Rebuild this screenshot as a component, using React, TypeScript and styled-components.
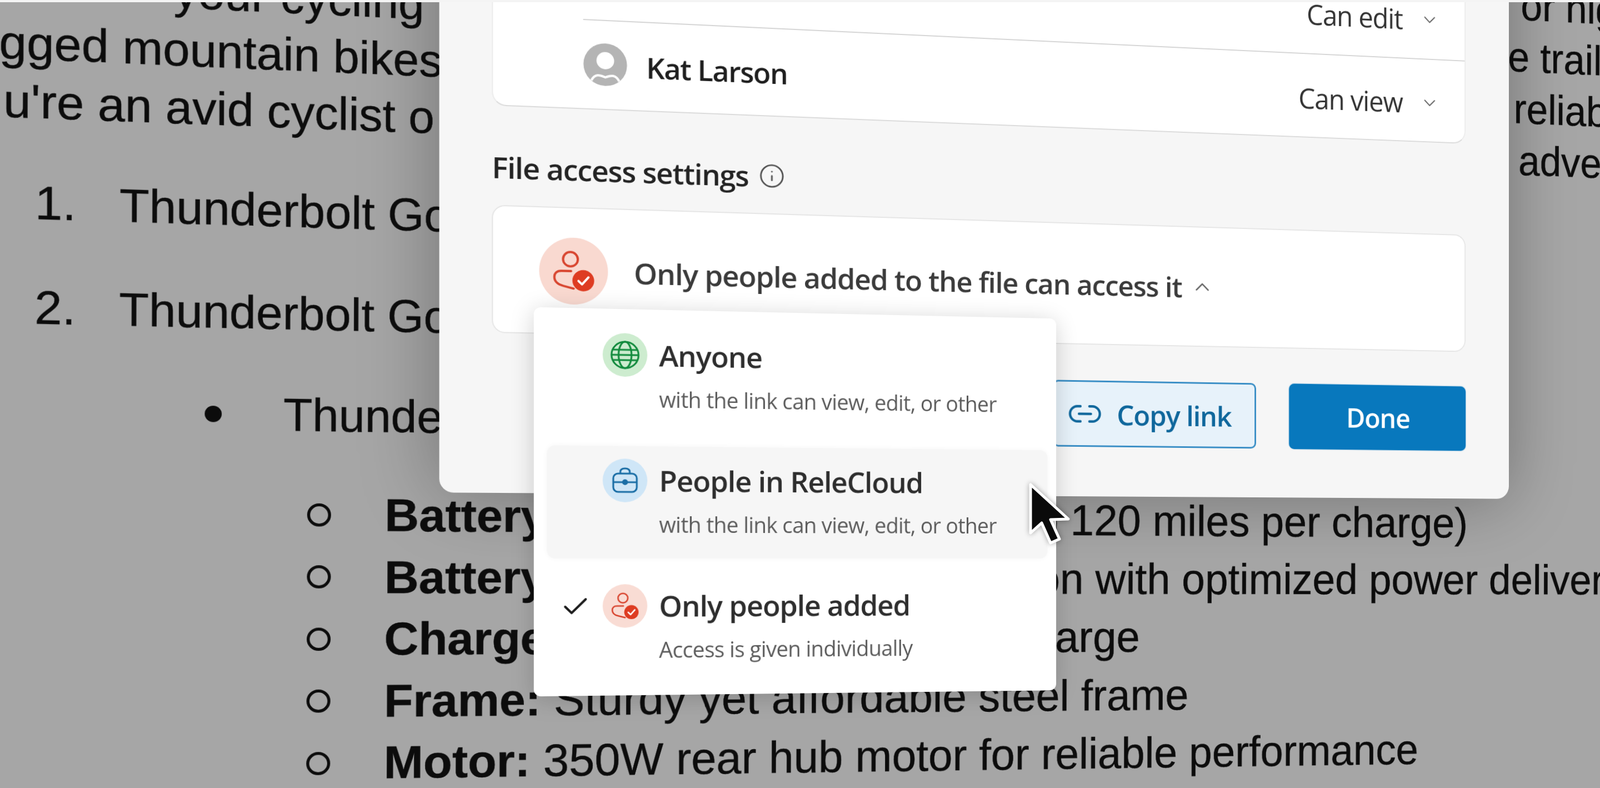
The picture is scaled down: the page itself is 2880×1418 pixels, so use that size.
import React from 'react'
import styled, { createGlobalStyle } from 'styled-components'
import { Check, ChevronDown, ChevronUp, Info, Link2 } from 'lucide-react'

const GlobalStyle = createGlobalStyle`
    html, body {
        margin: 0;
        padding: 0;
        background: #ffffff;
    }
`

const Stage = styled.div`
    position: relative;
    width: 2880px;
    height: 1418px;
    overflow: hidden;
    background: #a6a6a6;
    filter: blur(0.7px);
`

const TopStrip = styled.div`
    position: absolute;
    top: 0;
    left: 0;
    right: 0;
    height: 4px;
    background: #f4f4f4;
    z-index: 5;
`

const Doc = styled.div`
    width: 3060px;
    margin-top: -109px;
    font-family: "Liberation Sans", Arial, sans-serif;
    font-size: 79px;
    color: #0c0c0c;
    -webkit-text-stroke: 0.5px #0c0c0c;
    white-space: nowrap;
    transform-origin: 1440px 1124px;
    transform: perspective(2000px) rotateY(5.31deg) rotate(0.2deg);
`

const TextLine = styled.div`
    display: grid;
    grid-template-columns: 2795px 1fr;
    height: 99px;
    line-height: 99px;
`

const Lead = styled.span<{ $indent: number }>`
    padding-left: ${p => p.$indent}px;
`

const NumberedItem = styled.div<{ $gap: number }>`
    display: flex;
    height: 100px;
    line-height: 100px;
    margin-top: ${p => p.$gap}px;
    padding-left: 138px;
`

const ItemNumber = styled.span`
    width: 136px;
`

const BulletItem = styled.div`
    display: flex;
    align-items: center;
    height: 100px;
    margin-top: 75px;
    padding-left: 414px;
    gap: 102px;

    &::before {
        content: "";
        width: 28px;
        height: 28px;
        border-radius: 50%;
        background: #0c0c0c;
    }
`

const SubList = styled.div`
    display: flex;
    flex-direction: column;
    margin-top: 68px;
    font-size: 80.5px;
`

const SubItem = styled.div`
    display: flex;
    align-items: center;
    height: 107.5px;
    padding-left: 584px;
    gap: 90px;

    &::before {
        content: "";
        width: 30px;
        height: 30px;
        border: 5px solid #0c0c0c;
        border-radius: 50%;
    }

    b {
        font-weight: 700;
    }
`

const Dialog = styled.div`
    position: absolute;
    left: 830px;
    top: -200px;
    box-sizing: border-box;
    width: 1940px;
    height: 1092px;
    padding: 114px 86px 0 87px;
    background: #f6f6f6;
    border-radius: 24px;
    box-shadow: 0 0 130px rgba(0, 0, 0, 0.32);
    font-family: "Open Sans", "Noto Sans", sans-serif;
    transform-origin: 920px 1210px;
    transform: perspective(2000px) rotateY(5.71deg);
`

const PeopleCard = styled.div`
    background: #ffffff;
    border-radius: 0 0 24px 24px;
    border-bottom: 2px solid #dcdcdc;
    border-right: 2px solid #ececec;
    border-left: 2px solid #ececec;
    height: 310px;
    box-sizing: border-box;
`

const PersonRow = styled.div<{ $divider?: boolean }>`
    display: flex;
    align-items: center;
    height: 155px;
    box-sizing: border-box;
    margin-left: 151px;
    padding-right: 50px;
    border-bottom: ${p => (p.$divider ? '2px solid #d6d6d6' : 'none')};
`

const PersonName = styled.span`
    margin-left: 32px;
    font-size: 50px;
    font-weight: 600;
    letter-spacing: -1.4px;
    color: #1f1f1f;
`

const RoleSelect = styled.span`
    display: flex;
    align-items: center;
    gap: 34px;
    margin-left: auto;
    padding-top: 6px;
    font-size: 51px;
    letter-spacing: -1.2px;
    color: #333333;

    svg {
        color: #666666;
    }
`

const SectionTitle = styled.div`
    display: flex;
    align-items: center;
    gap: 18px;
    height: 60px;
    margin-top: 75px;
    font-size: 50.5px;
    font-weight: 600;
    letter-spacing: -1.2px;
    color: #242424;
`

const FileCard = styled.div`
    position: relative;
    display: flex;
    align-items: center;
    gap: 44px;
    box-sizing: border-box;
    height: 221px;
    margin-top: 36px;
    padding-left: 77px;
    background: #ffffff;
    border: 2px solid #e6e6e6;
    border-radius: 22px;
    font-size: 51px;
    font-weight: 600;
    letter-spacing: -1.2px;
    color: #3b3b3b;
`

const AccessValue = styled.span`
    display: flex;
    align-items: center;
    gap: 16px;

    svg {
        color: #666666;
    }
`

const IconDisc = styled.span<{ $size: number; $bg: string; $fg: string }>`
    display: flex;
    align-items: center;
    justify-content: center;
    flex: none;
    width: ${p => p.$size}px;
    height: ${p => p.$size}px;
    border-radius: 50%;
    background: ${p => p.$bg};
    color: ${p => p.$fg};
`

const Dropdown = styled.div`
    position: absolute;
    top: 173px;
    left: 68px;
    z-index: 2;
    display: flex;
    flex-direction: column;
    gap: 23px;
    box-sizing: border-box;
    width: 916px;
    height: 674px;
    padding: 20px 16px 20px 22px;
    background: #ffffff;
    border-radius: 12px;
    box-shadow: 0 6px 40px rgba(0, 0, 0, 0.18);
`

const Option = styled.div<{ $active?: boolean }>`
    display: flex;
    height: 198px;
    padding-left: 22px;
    border-radius: 14px;
    background: ${p => (p.$active ? '#f6f6f6' : 'transparent')};
    box-shadow: ${p => (p.$active ? '0 0 10px #f6f6f6' : 'none')};
`

const CheckSlot = styled.span`
    width: 52px;
    height: 52px;
    flex: none;
    margin: 32px 20px 0 0;
    color: #1c1c1c;
`

const OptionIcon = styled.div`
    margin: 22px 20px 0 0;
`

const OptionText = styled.div`
    display: flex;
    flex-direction: column;
    padding-top: 25px;
`

const OptionTitle = styled.span`
    height: 70px;
    line-height: 70px;
    font-size: 50.5px;
    font-weight: 600;
    letter-spacing: -1.1px;
    color: #2e2e2e;
`

const OptionHint = styled.span`
    margin-top: 17px;
    line-height: 50px;
    font-size: 37.5px;
    font-weight: 400;
    letter-spacing: -0.7px;
    color: #5c5c5c;
`

const Footer = styled.div`
    display: flex;
    justify-content: flex-end;
    gap: 63px;
    margin-top: 65px;
`

const CopyButton = styled.div`
    display: flex;
    align-items: center;
    justify-content: flex-end;
    gap: 26px;
    box-sizing: border-box;
    width: 380px;
    height: 121px;
    padding-right: 44px;
    background: #e7f2fa;
    border: 3px solid #3b8fc6;
    border-radius: 10px;
    font-size: 51px;
    font-weight: 600;
    letter-spacing: -1.2px;
    color: #0f679c;
`

const DoneButton = styled.div`
    display: flex;
    align-items: center;
    justify-content: center;
    width: 344px;
    height: 121px;
    background: #0878bd;
    border-radius: 10px;
    box-shadow: 0 0 2px #0878bd;
    font-size: 50.5px;
    font-weight: 600;
    letter-spacing: -1.2px;
    color: #ffffff;
`

const Pointer = styled.svg`
    position: absolute;
    left: 1843px;
    top: 863px;
    z-index: 4;
    filter: drop-shadow(0 0 5px rgba(0, 0, 0, 0.35));
`

function Avatar() {
    return (
        <svg width="75" height="80" viewBox="0 0 75 80" fill="none">
            <circle cx="37.5" cy="38" r="37" fill="#b4b4b4" />
            <circle cx="37.5" cy="31" r="15" fill="#ffffff" />
            <path d="M14 66 C20 54 28 56 37.5 60 C47 56 55 54 61 66" stroke="#ffffff" strokeWidth="4" />
            <path d="M0 62 L9 80 L0 80 Z M75 62 L66 80 L75 80 Z" fill="#ffffff" />
        </svg>
    )
}

function PersonCheck({ size }: { size: number }) {
    return (
        <svg width={size} height={size} viewBox="0 0 72 72" fill="none">
            <circle cx="31" cy="17" r="11.5" stroke="#d8452f" strokeWidth="3.5" />
            <path d="M32 36 H17 C10 36 6 40 6 46 C6 54 12 58 20 60 L36 64" stroke="#d8452f" strokeWidth="3.5" strokeLinecap="round" />
            <circle cx="51" cy="51" r="17" fill="#de3c22" />
            <path d="M43.5 51.5 L49 57 L59 45.5" stroke="#ffffff" strokeWidth="3.5" strokeLinecap="round" strokeLinejoin="round" />
        </svg>
    )
}

function Earth() {
    return (
        <svg width="52" height="52" viewBox="0 0 52 52" fill="none" stroke="#118a3c" strokeWidth="3">
            <circle cx="26" cy="26" r="23" />
            <ellipse cx="26" cy="26" rx="11" ry="23" />
            <path d="M6 17 H46 M3 26 H49 M6 35 H46" />
        </svg>
    )
}

function Briefcase() {
    return (
        <svg width="48" height="48" viewBox="0 0 48 48" fill="none" stroke="#1b6ea6" strokeWidth="3">
            <path d="M16 12 V9 C16 5 19 3 24 3 C29 3 32 5 32 9 V12" />
            <rect x="4" y="12" width="40" height="32" rx="8" />
            <path d="M4 27 H44" />
            <circle cx="24" cy="27" r="3.5" fill="#1b6ea6" />
        </svg>
    )
}

export default function App() {
    return (
        <Stage>
            <GlobalStyle />
            <TopStrip />
            <Doc>
                <TextLine><span /><Lead $indent={28}>or high</Lead></TextLine>
                <TextLine><Lead $indent={361}>your cycling</Lead><Lead $indent={2}>e trail</Lead></TextLine>
                <TextLine><Lead $indent={80}>gged mountain bikes</Lead><Lead $indent={14}>reliab</Lead></TextLine>
                <TextLine><Lead $indent={87}>u're an avid cyclist o</Lead><Lead $indent={24}>adve</Lead></TextLine>
                <NumberedItem $gap={72}><ItemNumber>1.</ItemNumber>Thunderbolt Go</NumberedItem>
                <NumberedItem $gap={77}><ItemNumber>2.</ItemNumber>Thunderbolt Go</NumberedItem>
                <BulletItem>Thunderbolt Go</BulletItem>
                <SubList>
                    <SubItem><span><b>Battery Range:</b> Max range (up to 120 miles per charge)</span></SubItem>
                    <SubItem><span><b>Battery Type:</b> Durable, Lithium-ion with optimized power delivery</span></SubItem>
                    <SubItem><span><b>Charge Time:</b> 4-6 hours to full charge</span></SubItem>
                    <SubItem><span><b>Frame:</b> Sturdy yet affordable steel frame</span></SubItem>
                    <SubItem><span><b>Motor:</b> 350W rear hub motor for reliable performance</span></SubItem>
                </SubList>
            </Doc>

            <Dialog>
                <PeopleCard>
                    <PersonRow $divider>
                        <RoleSelect>Can edit <ChevronDown size={38} strokeWidth={1.4} /></RoleSelect>
                    </PersonRow>
                    <PersonRow>
                        <Avatar />
                        <PersonName>Kat Larson</PersonName>
                        <RoleSelect>Can view <ChevronDown size={38} strokeWidth={1.4} /></RoleSelect>
                    </PersonRow>
                </PeopleCard>

                <SectionTitle>File access settings <Info size={46} strokeWidth={1.5} color="#555555" /></SectionTitle>

                <FileCard>
                    <IconDisc $size={116} $bg="#f9d9d0" $fg="#d8452f"><PersonCheck size={78} /></IconDisc>
                    <AccessValue>Only people added to the file can access it <ChevronUp size={44} strokeWidth={1.4} /></AccessValue>

                    <Dropdown>
                        <Option>
                            <CheckSlot />
                            <OptionIcon>
                                <IconDisc $size={76} $bg="#cdeccf" $fg="#118a3c"><Earth /></IconDisc>
                            </OptionIcon>
                            <OptionText>
                                <OptionTitle>Anyone</OptionTitle>
                                <OptionHint>with the link can view, edit, or other</OptionHint>
                            </OptionText>
                        </Option>
                        <Option $active>
                            <CheckSlot />
                            <OptionIcon>
                                <IconDisc $size={76} $bg="#cfe6f7" $fg="#1b6ea6"><Briefcase /></IconDisc>
                            </OptionIcon>
                            <OptionText>
                                <OptionTitle>People in ReleCloud</OptionTitle>
                                <OptionHint>with the link can view, edit, or other</OptionHint>
                            </OptionText>
                        </Option>
                        <Option>
                            <CheckSlot><Check size={52} strokeWidth={1.8} /></CheckSlot>
                            <OptionIcon>
                                <IconDisc $size={76} $bg="#f9dcd4" $fg="#d8452f"><PersonCheck size={52} /></IconDisc>
                            </OptionIcon>
                            <OptionText>
                                <OptionTitle>Only people added</OptionTitle>
                                <OptionHint>Access is given individually</OptionHint>
                            </OptionText>
                        </Option>
                    </Dropdown>
                </FileCard>

                <Footer>
                    <CopyButton><Link2 size={66} strokeWidth={1.6} />Copy link</CopyButton>
                    <DoneButton>Done</DoneButton>
                </Footer>
            </Dialog>

            <Pointer width="90" height="124" viewBox="0 0 90 124">
                <path d="M12 9 L12 96 L32 78 L48 114 L64 107 L48 72 L80 71 Z" fill="#0a0a0a" stroke="#ffffff" strokeWidth="5" strokeLinejoin="round" />
            </Pointer>
        </Stage>
    )
}
